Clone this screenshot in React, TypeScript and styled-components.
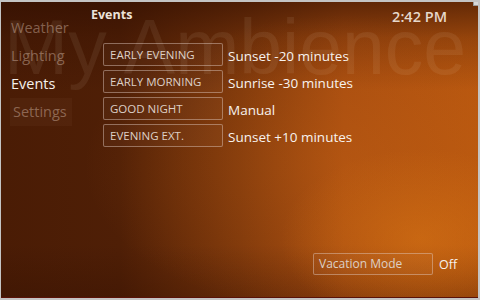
import React from "react";
import styled, { createGlobalStyle } from "styled-components";

const Global = createGlobalStyle`
  html, body { margin: 0; padding: 0; background: #ffffff; }
  body { font-family: "Open Sans", "DejaVu Sans", sans-serif; }
  * { box-sizing: border-box; }
`;

const Frame = styled.div`
  position: relative;
  width: 480px;
  height: 300px;
  border-top: 2px solid #c4c4c4;
  border-left: 1px solid #c4c4c4;
  border-right: 2px solid #c4c4c4;
  border-bottom: 2px solid #c4c4c4;
  overflow: hidden;
  display: grid;
  grid-template-columns: 90px 1fr;
  background:
    radial-gradient(ellipse 140px 90px at 88% 80%, rgba(220, 120, 20, 0.5), rgba(220, 120, 20, 0) 100%),
    radial-gradient(ellipse 260px 150px at 72% 55%, rgba(200, 100, 20, 0.35), rgba(200, 100, 20, 0) 100%),
    linear-gradient(180deg, rgba(45, 12, 0, 0.6) 0%, rgba(45, 12, 0, 0.25) 12%, rgba(45, 12, 0, 0) 30%, rgba(45, 12, 0, 0) 82%, rgba(45, 12, 0, 0.3) 100%),
    linear-gradient(90deg, #4a1c05 0%, #4f1f06 25%, #7a360b 50%, #a84d10 72%, #b8570f 100%);
  &::after {
    content: "";
    position: absolute;
    left: 0;
    right: 0;
    bottom: 0;
    height: 1px;
    background: #5a1208;
  }
`;

const CornerBox = styled.span`
  position: absolute;
  top: -2px;
  right: -1px;
  width: 6px;
  height: 6px;
  background: #d8d8d8;
  border: 1px solid #9a9a9a;
  z-index: 3;
`;

const Watermark = styled.div`
  position: absolute;
  left: 3px;
  top: 1px;
  font-family: "Liberation Sans", Arial, sans-serif;
  font-size: 77px;
  line-height: 88px;
  color: rgba(255, 235, 220, 0.075);
  white-space: nowrap;
  pointer-events: none;
  z-index: 0;
`;

const Nav = styled.nav`
  position: relative;
  z-index: 1;
  display: flex;
  flex-direction: column;
  padding-top: 12px;
`;

const NavItem = styled.div<{ $active?: boolean; $boxed?: boolean }>`
  height: 28px;
  line-height: 28px;
  font-size: 14.5px;
  padding-left: ${(p) => (p.$boxed ? "3px" : "10px")};
  margin-left: ${(p) => (p.$boxed ? "9px" : "0")};
  width: ${(p) => (p.$boxed ? "62px" : "auto")};
  color: ${(p) => (p.$active ? "#f6f1ec" : "rgba(225, 200, 185, 0.42)")};
  background: ${(p) => (p.$boxed ? "rgba(255, 220, 190, 0.035)" : "transparent")};
`;

const Main = styled.main`
  position: relative;
  z-index: 1;
  display: flex;
  flex-direction: column;
`;

const Header = styled.header`
  display: flex;
  justify-content: space-between;
  align-items: flex-start;
  height: 41px;
`;

const Title = styled.h1`
  margin: 5px 0 0 0;
  font-size: 12.5px;
  font-weight: 700;
  line-height: 16px;
  color: #ece2da;
`;

const Clock = styled.div`
  margin: 6px 31px 0 0;
  font-size: 14.5px;
  font-weight: 600;
  line-height: 18px;
  color: #e6d8cb;
`;

const List = styled.div`
  display: flex;
  flex-direction: column;
  gap: 4px;
  padding-left: 12px;
`;

const Row = styled.div`
  display: flex;
  align-items: center;
  gap: 5px;
`;

const Tag = styled.div`
  width: 120px;
  height: 23px;
  border: 1px solid rgba(225, 205, 195, 0.45);
  border-radius: 2px;
  background: rgba(255, 230, 210, 0.03);
  padding-left: 6px;
  font-size: 11.5px;
  line-height: 21px;
  color: #ddd0c6;
  white-space: nowrap;
`;

const Value = styled.div`
  font-size: 13.5px;
  color: #f7f2ee;
  line-height: 18px;
  white-space: nowrap;
  padding-top: 2px;
`;

const Footer = styled.div`
  margin-top: auto;
  margin-bottom: 23px;
  padding-left: 222px;
  display: flex;
  align-items: center;
  gap: 6px;
`;

const ToggleLabel = styled.div`
  width: 120px;
  height: 22px;
  border: 1px solid rgba(225, 205, 195, 0.45);
  border-radius: 2px;
  background: rgba(255, 230, 210, 0.03);
  padding-left: 5px;
  font-size: 12px;
  line-height: 20px;
  color: #ddd0c6;
`;

const ToggleValue = styled.div`
  font-size: 12.5px;
  color: #f7f2ee;
`;

const events = [
  { name: "EARLY EVENING", when: "Sunset -20 minutes" },
  { name: "EARLY MORNING", when: "Sunrise -30 minutes" },
  { name: "GOOD NIGHT", when: "Manual" },
  { name: "EVENING EXT.", when: "Sunset +10 minutes" },
];

export default function App() {
  return (
    <>
      <Global />
      <Frame>
        <CornerBox />
        <Watermark>My Ambience</Watermark>
        <Nav>
          <NavItem>Weather</NavItem>
          <NavItem>Lighting</NavItem>
          <NavItem $active>Events</NavItem>
          <NavItem $boxed>Settings</NavItem>
        </Nav>
        <Main>
          <Header>
            <Title>Events</Title>
            <Clock>2:42 PM</Clock>
          </Header>
          <List>
            {events.map((e) => (
              <Row key={e.name}>
                <Tag>{e.name}</Tag>
                <Value>{e.when}</Value>
              </Row>
            ))}
          </List>
          <Footer>
            <ToggleLabel>Vacation Mode</ToggleLabel>
            <ToggleValue>Off</ToggleValue>
          </Footer>
        </Main>
      </Frame>
    </>
  );
}
